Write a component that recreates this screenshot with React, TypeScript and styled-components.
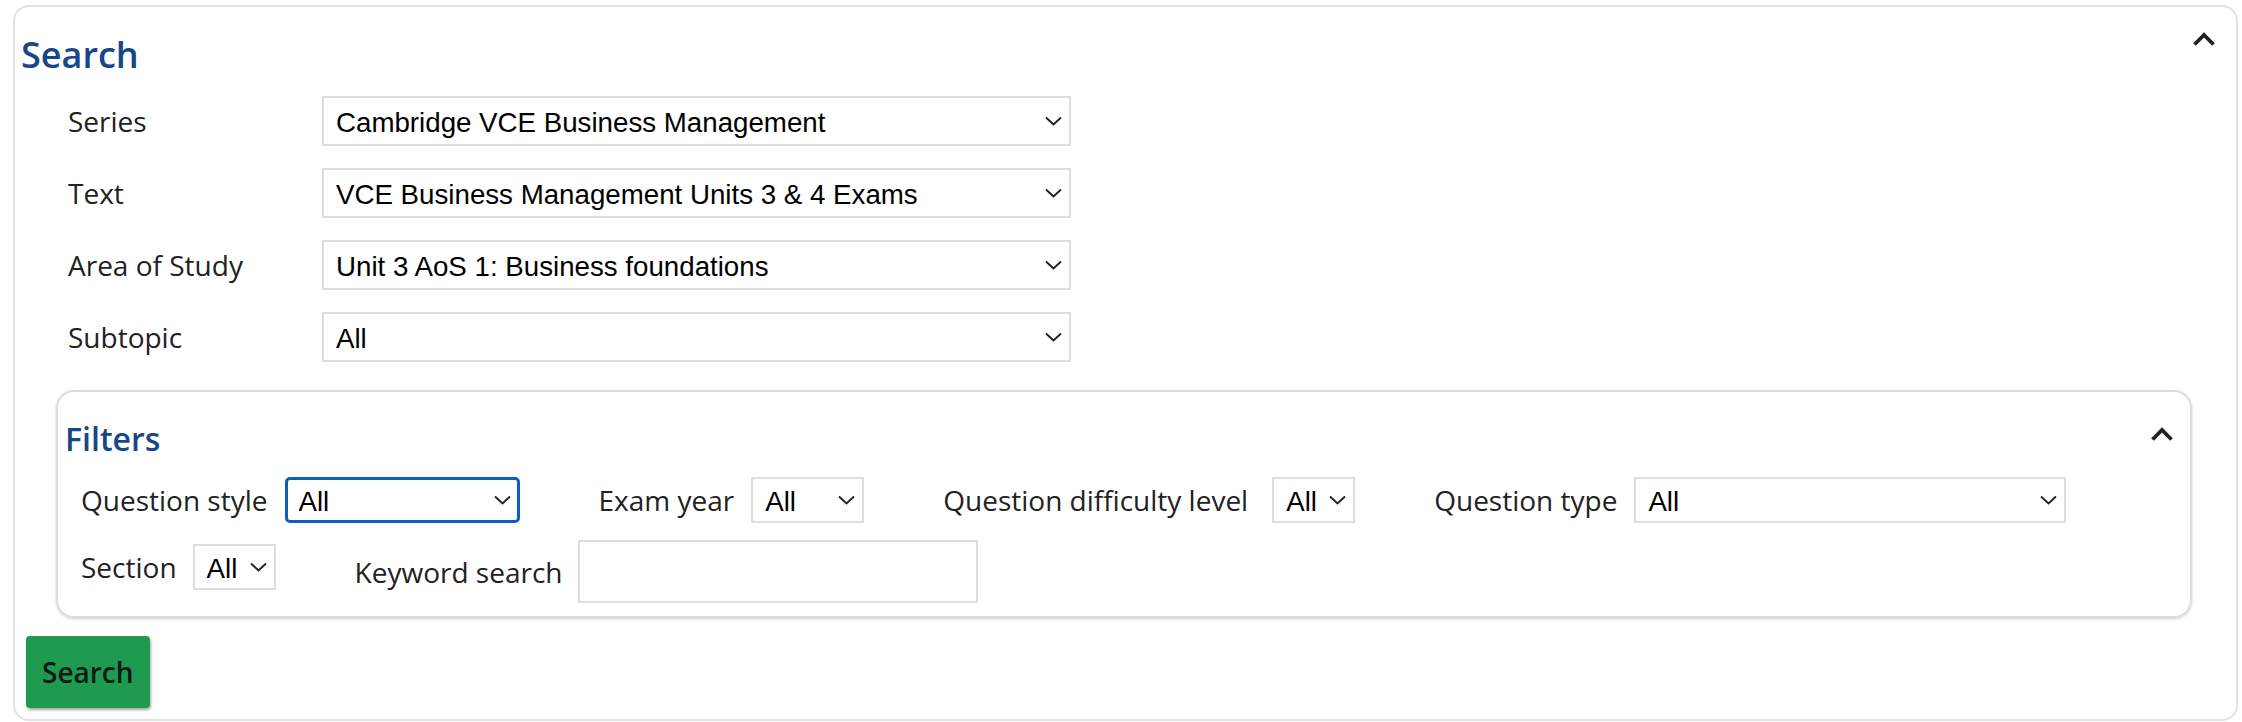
import * as React from 'react';
import styled, { createGlobalStyle, css } from 'styled-components';

const GlobalStyle = createGlobalStyle`
  html, body {
    margin: 0;
    padding: 0;
    background: #fff;
  }

  body {
    font-family: 'Open Sans', 'DejaVu Sans', sans-serif;
    color: #222;
  }
`;

const Page = styled.div`
  padding: 5px 0 0 13px;
`;

const Card = styled.section`
  box-sizing: border-box;
  width: 2225px;
  border: 2px solid #e2e2e2;
  border-radius: 16px;
  padding: 0 20px 11px 6px;
`;

const Header = styled.div<{ $top: number }>`
  display: flex;
  justify-content: space-between;
  align-items: flex-start;
  margin-top: ${p => p.$top}px;
`;

const Title = styled.h2<{ $size: number }>`
  margin: 0;
  font-size: ${p => p.$size}px;
  line-height: ${p => Math.round(p.$size * 1.36)}px;
  font-weight: 600;
  color: #17478a;
`;

const Toggle = styled.button<{ $offset: number }>`
  border: none;
  background: none;
  padding: 0;
  margin-top: ${p => p.$offset}px;
  display: flex;
  cursor: pointer;
`;

const FormGrid = styled.div`
  display: grid;
  grid-template-columns: 254px 749px;
  row-gap: 22px;
  align-items: center;
  margin-top: 17px;
  padding-left: 47px;
`;

const Label = styled.label<{ $gap?: number }>`
  font-size: 28px;
  color: #222;
  white-space: nowrap;
  margin-right: ${p => p.$gap ?? 0}px;
`;

const SelectWrap = styled.div<{ $width: number }>`
  position: relative;
  width: ${p => p.$width}px;
  flex: none;

  & > svg {
    position: absolute;
    right: 9px;
    top: 50%;
    transform: translateY(-50%);
    pointer-events: none;
  }
`;

const Select = styled.select<{ $height: number; $focused?: boolean }>`
  appearance: none;
  box-sizing: border-box;
  display: block;
  width: 100%;
  height: ${p => p.$height}px;
  margin: 0;
  padding: 2px 34px 0 12px;
  border: 2px solid #dedede;
  border-radius: 0;
  background: #fff;
  color: #000;
  font-family: 'Liberation Sans', Arial, sans-serif;
  font-size: 27.7px;
  outline: none;

  ${p =>
    p.$focused &&
    css`
      border: 3px solid #0b5cc4;
      border-radius: 5px;
      padding-left: 11px;
    `}
`;

const FiltersCard = styled.div`
  box-sizing: border-box;
  margin: 28px 24px 0 35px;
  border: 2px solid #dddddd;
  border-radius: 18px;
  box-shadow: 0 1px 3px rgba(0, 0, 0, 0.18);
  padding: 0 16px 13px 7px;
`;

const FilterRow = styled.div<{ $top: number; $align: string }>`
  display: flex;
  align-items: ${p => p.$align};
  margin-top: ${p => p.$top}px;
  padding-left: 16px;
`;

const Group = styled.div<{ $lift?: number }>`
  display: flex;
  align-items: center;
  margin-right: 79px;
  margin-top: ${p => p.$lift ?? 0}px;
`;

const TextInput = styled.input`
  box-sizing: border-box;
  width: 400px;
  height: 63px;
  border: 2px solid #dedede;
  border-radius: 0;
  padding: 0 12px;
  font-family: 'Liberation Sans', Arial, sans-serif;
  font-size: 28px;
  outline: none;
`;

const SearchButton = styled.button`
  box-sizing: border-box;
  display: block;
  margin: 18px 0 0 5px;
  height: 72px;
  padding: 0 16px;
  border: none;
  border-radius: 4px;
  background: #1e9b51;
  box-shadow: 1px 2px 3px rgba(0, 0, 0, 0.35);
  color: #0c1a12;
  font-family: 'Open Sans', sans-serif;
  font-size: 28px;
  font-weight: 600;
  cursor: pointer;
`;

const ChevronDown = () => (
  <svg width='17' height='10' viewBox='0 0 17 10'>
    <polyline
      points='1,1.5 8.5,8.5 16,1.5'
      fill='none'
      stroke='#222'
      strokeWidth='1.9'
    />
  </svg>
);

const ChevronUp = () => (
  <svg width='24' height='15' viewBox='0 0 24 15'>
    <polyline
      points='2.5,12.5 12,3 21.5,12.5'
      fill='none'
      stroke='#222'
      strokeWidth='3.8'
    />
  </svg>
);

interface DropProps {
  width: number;
  height: number;
  value: string;
  focused?: boolean;
}

const Dropdown = ({ width, height, value, focused }: DropProps) => (
  <SelectWrap $width={width}>
    <Select $height={height} $focused={focused} defaultValue={value}>
      <option>{value}</option>
    </Select>
    <ChevronDown />
  </SelectWrap>
);

const fields = [
  { label: 'Series', value: 'Cambridge VCE Business Management' },
  { label: 'Text', value: 'VCE Business Management Units 3 & 4 Exams' },
  { label: 'Area of Study', value: 'Unit 3 AoS 1: Business foundations' },
  { label: 'Subtopic', value: 'All' },
];

const filters = [
  { label: 'Question style', width: 235, gap: 17, focused: true },
  { label: 'Exam year', width: 113, gap: 17 },
  { label: 'Question difficulty level', width: 83, gap: 24 },
  { label: 'Question type', width: 432, gap: 17 },
];

export default function App() {
  return (
    <Page>
      <GlobalStyle />
      <Card>
        <Header $top={23}>
          <Title $size={36}>Search</Title>
          <Toggle $offset={2} aria-label='Collapse search'>
            <ChevronUp />
          </Toggle>
        </Header>

        <FormGrid>
          {fields.map(f => (
            <React.Fragment key={f.label}>
              <Label>{f.label}</Label>
              <Dropdown width={749} height={50} value={f.value} />
            </React.Fragment>
          ))}
        </FormGrid>

        <FiltersCard>
          <Header $top={25}>
            <Title $size={32}>Filters</Title>
            <Toggle $offset={10} aria-label='Collapse filters'>
              <ChevronUp />
            </Toggle>
          </Header>

          <FilterRow $top={16} $align='center'>
            {filters.map(f => (
              <Group key={f.label}>
                <Label $gap={f.gap}>{f.label}</Label>
                <Dropdown
                  width={f.width}
                  height={46}
                  value='All'
                  focused={f.focused}
                />
              </Group>
            ))}
          </FilterRow>

          <FilterRow $top={17} $align='flex-start'>
            <Group $lift={4}>
              <Label $gap={16}>Section</Label>
              <Dropdown width={83} height={46} value='All' />
            </Group>
            <Group>
              <Label $gap={15}>Keyword search</Label>
              <TextInput type='text' />
            </Group>
          </FilterRow>
        </FiltersCard>

        <SearchButton>Search</SearchButton>
      </Card>
    </Page>
  );
}
